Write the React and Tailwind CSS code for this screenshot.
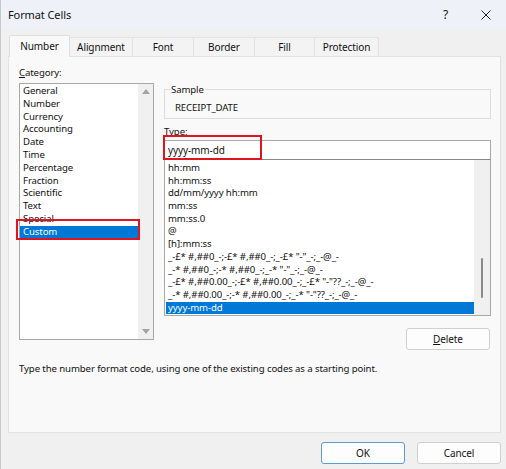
import React from "react";

const CATEGORIES = ["General", "Number", "Currency", "Accounting", "Date", "Time", "Percentage", "Fraction", "Scientific", "Text", "Special", "Custom"];

const TYPES = [
  "hh:mm",
  "hh:mm:ss",
  "dd/mm/yyyy hh:mm",
  "mm:ss",
  "mm:ss.0",
  "@",
  "[h]:mm:ss",
  '_-£* #,##0_-;-£* #,##0_-;_-£* "-"_-;_-@_-',
  '_-* #,##0_-;-* #,##0_-;_-* "-"_-;_-@_-',
  '_-£* #,##0.00_-;-£* #,##0.00_-;_-£* "-"??_-;_-@_-',
  '_-* #,##0.00_-;-* #,##0.00_-;_-* "-"??_-;_-@_-',
  "yyyy-mm-dd",
];

const TABS = [
  { name: "Number", w: "w-[61px]" },
  { name: "Alignment", w: "w-[63px]" },
  { name: "Font", w: "w-[61px]" },
  { name: "Border", w: "w-[61px]" },
  { name: "Fill", w: "w-[60px]" },
  { name: "Protection", w: "w-[64px]" },
];

const App = () => {
  return (
    <div className="relative w-[506px] h-[469px] overflow-hidden bg-[#f0f0f0] border-l border-[#c8c8c8] text-[#111] font-['Noto_Sans','Liberation_Sans',sans-serif] text-[9.6px] tracking-[-0.1px]">
      {/* title bar */}
      <div className="h-[30px] bg-[#eef2f8] flex items-center pl-[7px]">
        <span className="text-[11px]">Format Cells</span>
        <span className="ml-auto text-[12px] mr-[33px]">?</span>
        <svg width="10" height="10" viewBox="0 0 10 10" className="mr-[15px]">
          <path d="M0.5 0.5L9.5 9.5M9.5 0.5L0.5 9.5" stroke="#222" strokeWidth="1" />
        </svg>
      </div>

      {/* tabs */}
      <div className="flex items-end h-[21px] mt-[5px] pl-[8px] relative z-10">
        {TABS.map((t, i) =>
          i === 0 ? (
            <div key={t.name} className={`${t.w} h-[22px] -mb-px flex items-center justify-center bg-[#f9f9f9] border border-b-0 border-[#dedede] rounded-t-[2px] text-[10px]`}>
              {t.name}
            </div>
          ) : (
            <div key={t.name} className={`${t.w} h-[19px] flex items-center justify-center bg-[#f3f3f3] border border-l-0 border-b-0 border-[#e2e2e2] text-[10px]`}>
              {t.name}
            </div>
          )
        )}
      </div>

      {/* panel */}
      <div className="ml-[7px] w-[493px] h-[377px] bg-[#f9f9f9] border border-[#e2e2e2] pl-[10px] pt-[9px]">
        <div className="flex gap-[10px]">
          {/* category column */}
          <div className="w-[135px] flex flex-col">
            <div className="h-[17px] leading-[13px]">
              <span className="underline">C</span>ategory:
            </div>
            <div className="h-[257px] bg-white border border-[#a8a8a8] flex">
              <div className="flex-1 pt-px">
                {CATEGORIES.map((c) => (
                  <div
                    key={c}
                    className={`h-[12.8px] leading-[12.8px] pl-[3px] ${c === "Custom" ? "bg-[#0078d7] text-white" : ""}`}
                  >
                    {c}
                  </div>
                ))}
              </div>
              <div className="w-[15px] bg-[#f0f0f0] flex flex-col items-center justify-between py-[5px]">
                <svg width="8" height="5" viewBox="0 0 8 5">
                  <path d="M4 0L8 5H0Z" fill="#a3a3a3" />
                </svg>
                <svg width="8" height="5" viewBox="0 0 8 5">
                  <path d="M0 0H8L4 5Z" fill="#a3a3a3" />
                </svg>
              </div>
            </div>
          </div>

          {/* type column */}
          <div className="w-[327px] flex flex-col">
            <fieldset className="mt-[17px] h-[36px] border border-[#dcdcdc] pl-[5px]">
              <legend className="px-px leading-[13px]">Sample</legend>
              <div className="pl-[5px] mt-[5px] leading-[13px]">RECEIPT_DATE</div>
            </fieldset>
            <div className="mt-[6px] h-[15px] leading-[13px]">
              <span className="underline">T</span>ype:
            </div>
            <div className="h-[20px] bg-white border border-[#a8a8a8] border-b-[#8a8a8a] flex items-center pl-[3px] text-[10px]">
              yyyy-mm-dd
            </div>
            <div className="h-[156px] bg-white border border-t-0 border-[#a8a8a8] flex">
              <div className="flex-1 pt-[2px] overflow-hidden whitespace-nowrap">
                {TYPES.map((t, i) => (
                  <div
                    key={i}
                    className={`h-[12.7px] leading-[12.7px] ml-px pl-[2px] ${i === TYPES.length - 1 ? "bg-[#0078d7] text-white" : ""}`}
                  >
                    {t}
                  </div>
                ))}
              </div>
              <div className="w-[16px] bg-[#f0f0f0] flex justify-center">
                <div className="w-[2px] h-[40px] mt-[98px] bg-[#8a8a8a] rounded-full" />
              </div>
            </div>
            <div className="flex justify-end mt-[12px]">
              <button className="w-[84px] h-[22px] mr-px bg-[#fdfdfd] border border-[#d0d0d0] rounded-[3px] text-[10px]">
                <span className="underline">D</span>elete
              </button>
            </div>
          </div>
        </div>
        <div className="mt-[12px] leading-[13px]">
          Type the number format code, using one of the existing codes as a starting point.
        </div>
      </div>

      {/* buttons */}
      <div className="flex justify-end gap-[12px] mt-[9px] pr-[5px]">
        <button className="w-[84px] h-[22px] bg-[#fdfdfd] border-[1.5px] border-[#5e9ad6] rounded-[3px] text-[10px]">OK</button>
        <button className="w-[84px] h-[22px] bg-[#fdfdfd] border border-[#d0d0d0] rounded-[3px] text-[10px]">Cancel</button>
      </div>

      {/* red annotation boxes */}
      <div className="absolute left-[15px] top-[219px] w-[124px] h-[21px] border-[2.5px] border-[#e0141e]" />
      <div className="absolute left-[162px] top-[135px] w-[99px] h-[25px] border-[2.5px] border-[#e0141e]" />
    </div>
  );
};

export default App;
